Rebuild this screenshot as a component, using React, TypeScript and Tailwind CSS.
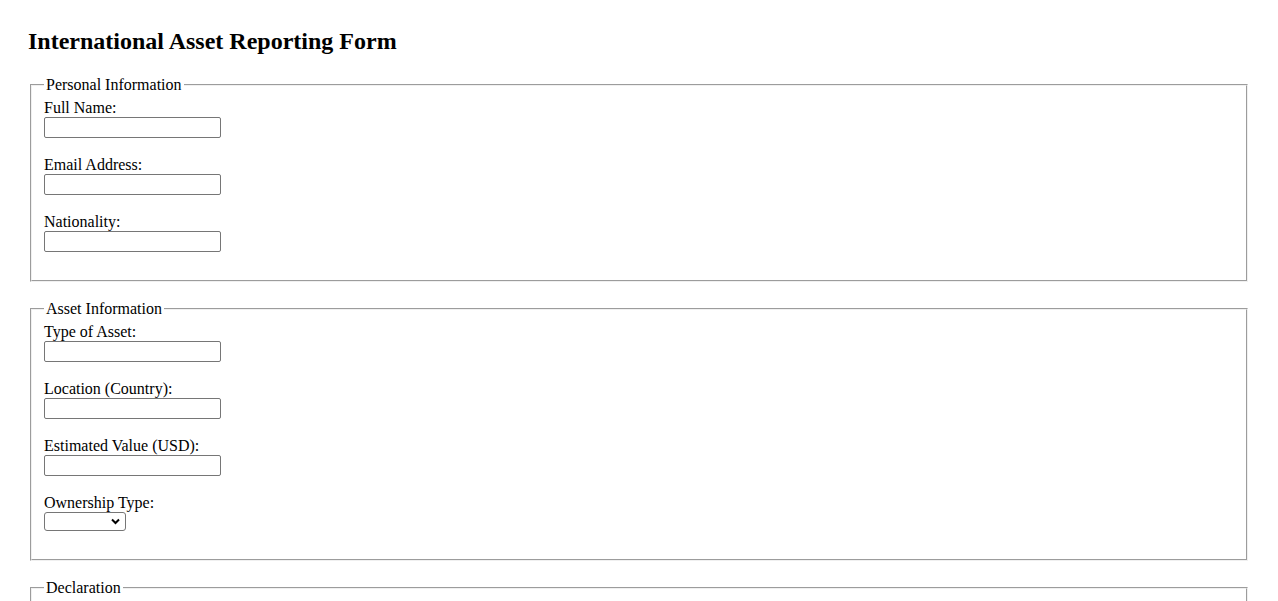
import React from "react";

function Field({ label }: { label: string }) {
  return (
    <div>
      <label className="block h-[18px] leading-[18px]">{label}</label>
      <input
        type="text"
        className="block h-[21px] w-[177px] rounded-[2px] border border-[#767676] bg-white px-[2px] text-[13.33px] font-['Liberation_Sans',Arial,sans-serif]"
      />
      <div className="h-[18px]" />
    </div>
  );
}

function SelectField({ label }: { label: string }) {
  return (
    <div>
      <label className="block h-[18px] leading-[18px]">{label}</label>
      <div className="h-[19px]">
        <div className="relative h-[19px] w-[82px]">
          <select className="block h-[19px] w-[82px] appearance-none rounded-[3px] border border-[#767676] bg-white text-[13.33px]" />
          <svg
            className="pointer-events-none absolute right-[6px] top-[6px]"
            width="9"
            height="7"
            viewBox="0 0 9 7"
          >
            <polyline points="1,1.5 4.5,5 8,1.5" fill="none" stroke="#000" strokeWidth="2" />
          </svg>
        </div>
      </div>
      <div className="h-[18px]" />
    </div>
  );
}

function Fieldset({ legend, children, className = "" }: { legend: string; children: React.ReactNode; className?: string }) {
  return (
    <fieldset
      className={`mx-[2px] border-2 [border-style:groove] border-[#f0f0f0] px-[12px] pb-[10px] ${className}`}
    >
      <legend className="px-[2px] leading-[18px]">{legend}</legend>
      {children}
    </fieldset>
  );
}

export default function App() {
  return (
    <div className="min-h-screen bg-white px-[28px] pt-[28px] text-[16px] text-black font-['Liberation_Serif','Times_New_Roman',serif]">
      <h2 className="mb-[20px] text-[24px] font-bold leading-[27.6px]">International Asset Reporting Form</h2>
      <form>
        <Fieldset legend="Personal Information" className="pt-[5.6px]">
          <Field label="Full Name:" />
          <Field label="Email Address:" />
          <Field label="Nationality:" />
        </Fieldset>
        <Fieldset legend="Asset Information" className="mt-[18px] pt-[4.6px]">
          <Field label="Type of Asset:" />
          <Field label="Location (Country):" />
          <Field label="Estimated Value (USD):" />
          <SelectField label="Ownership Type:" />
        </Fieldset>
        <Fieldset legend="Declaration" className="mt-[18px] pt-[5.6px]">
          <div className="h-[18px] leading-[18px]">
            <input type="checkbox" className="mr-1" />
            <span>I declare that the information provided is true and complete.</span>
          </div>
          <div className="h-[18px]" />
        </Fieldset>
        <div className="h-[40px]" />
      </form>
    </div>
  );
}
